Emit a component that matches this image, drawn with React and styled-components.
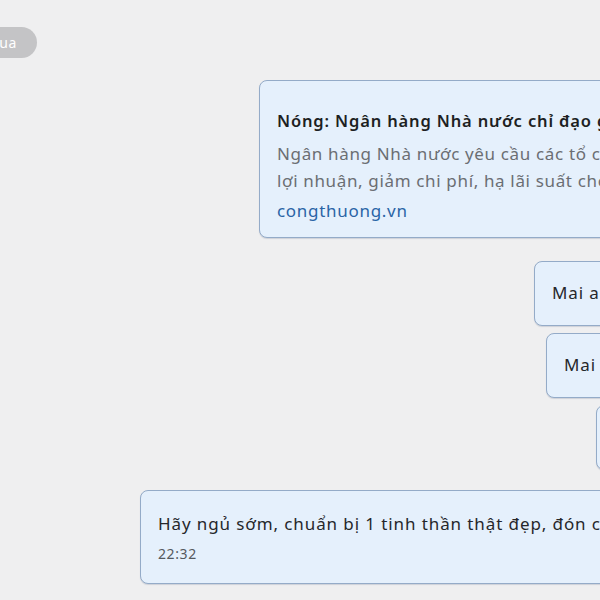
import React from "react";
import styled, { createGlobalStyle } from "styled-components";

const GlobalStyle = createGlobalStyle`
  html, body {
    margin: 0;
    padding: 0;
    background: #efeff0;
    overflow: hidden;
  }
  body {
    font-family: "Noto Sans", "Roboto", sans-serif;
  }
`;

// Khung chat, phần bên phải bị cắt khỏi màn hình
const ChatArea = styled.div`
  width: 600px;
  height: 600px;
  overflow: hidden;
  box-sizing: border-box;
  padding-top: 27px;
  display: flex;
  flex-direction: column;
  align-items: flex-start;
`;

const DateRow = styled.div`
  display: flex;
  margin-left: -68px;
  margin-bottom: 22px;
`;

const DatePill = styled.span`
  display: inline-block;
  height: 31px;
  line-height: 31px;
  padding: 0 20px;
  border-radius: 16px;
  background: #c4c4c6;
  color: #ffffff;
  font-size: 14px;
  letter-spacing: 0.6px;
  white-space: nowrap;
`;

const Bubble = styled.div`
  flex: none;
  box-sizing: border-box;
  margin-left: ${(p) => p.$left}px;
  margin-bottom: ${(p) => p.$gap}px;
  width: 760px;
  padding: ${(p) => p.$pad};
  background: #e5f0fc;
  border: 1px solid #94abc8;
  border-radius: 8px;
  box-shadow: 0 1px 1px rgba(60, 80, 110, 0.18);
  white-space: nowrap;
  overflow: hidden;
  color: #25272b;
`;

const Title = styled.div`
  font-size: 16.5px;
  font-weight: 600;
  line-height: 28px;
  letter-spacing: 0.85px;
  color: #1d1f23;
`;

const DescBlock = styled.div`
  margin-top: 5px;
`;

const Desc = styled.div`
  font-size: 17px;
  line-height: 27px;
  letter-spacing: 0.65px;
  color: #6b6e73;
`;

const Link = styled.div`
  margin-top: 2px;
  font-size: 17px;
  line-height: 30px;
  letter-spacing: 0.7px;
  color: #2a64a6;
`;

const Text = styled.div`
  font-size: 17px;
  line-height: 28px;
  letter-spacing: 0.9px;
`;

const Time = styled.div`
  margin-top: 7px;
  font-size: 14px;
  line-height: 18px;
  letter-spacing: 0.6px;
  color: #55595e;
`;

export default function App() {
  return (
    <>
      <GlobalStyle />
      <ChatArea>
        <DateRow>
          <DatePill>Hôm qua</DatePill>
        </DateRow>

        <Bubble $pad="26px 17px 11px" $left={259} $gap={23}>
          <Title>Nóng: Ngân hàng Nhà nước chỉ đạo giảm lãi suất cho vay</Title>
          <DescBlock>
            <Desc>Ngân hàng Nhà nước yêu cầu các tổ chức tín dụng tiết giảm</Desc>
            <Desc>lợi nhuận, giảm chi phí, hạ lãi suất cho vay hỗ trợ doanh nghiệp</Desc>
          </DescBlock>
          <Link>congthuong.vn</Link>
        </Bubble>

        <Bubble $pad="17px 17px 18px" $left={534} $gap={7}>
          <Text>Mai anh đi làm sớm nhé</Text>
        </Bubble>

        <Bubble $pad="17px 17px 18px" $left={546} $gap={7}>
          <Text>Mai em cũng dậy sớm</Text>
        </Bubble>

        <Bubble $pad="17px 17px 18px" $left={596} $gap={20}>
          <Text>Ok</Text>
        </Bubble>

        <Bubble $pad="19px 17px 20px" $left={140} $gap={0}>
          <Text>Hãy ngủ sớm, chuẩn bị 1 tinh thần thật đẹp, đón chào ngày mới nhé</Text>
          <Time>22:32</Time>
        </Bubble>
      </ChatArea>
    </>
  );
}
